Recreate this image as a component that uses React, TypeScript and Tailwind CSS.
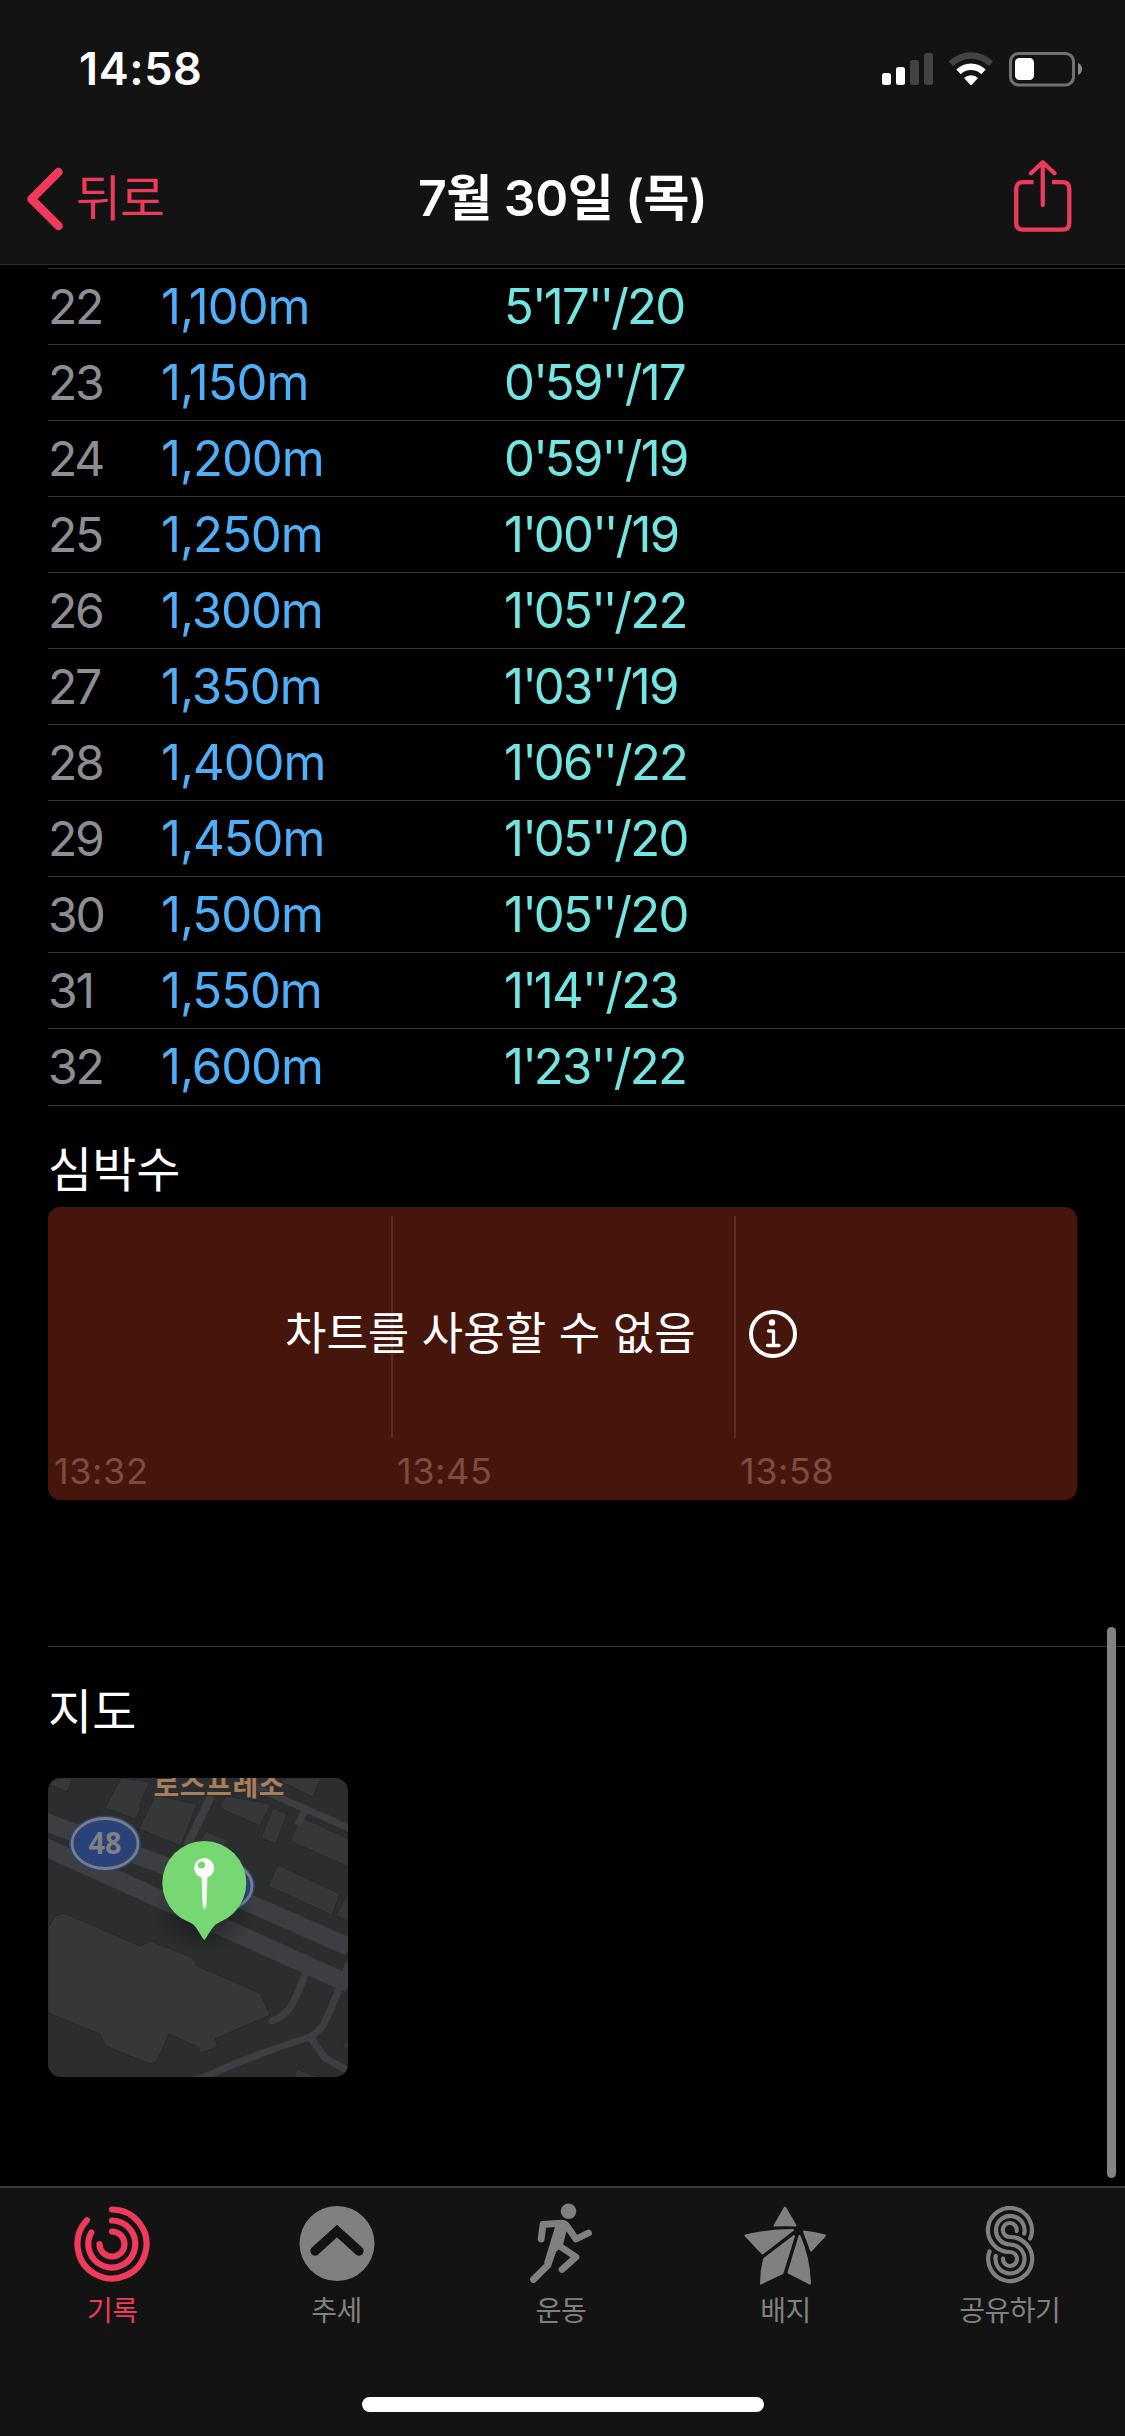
import React from "react";

type Split = {
  no: number;
  distance: string;
  pace: string;
};

const splits: Split[] = [
  { no: 22, distance: "1,100m", pace: "5'17''/20" },
  { no: 23, distance: "1,150m", pace: "0'59''/17" },
  { no: 24, distance: "1,200m", pace: "0'59''/19" },
  { no: 25, distance: "1,250m", pace: "1'00''/19" },
  { no: 26, distance: "1,300m", pace: "1'05''/22" },
  { no: 27, distance: "1,350m", pace: "1'03''/19" },
  { no: 28, distance: "1,400m", pace: "1'06''/22" },
  { no: 29, distance: "1,450m", pace: "1'05''/20" },
  { no: 30, distance: "1,500m", pace: "1'05''/20" },
  { no: 31, distance: "1,550m", pace: "1'14''/23" },
  { no: 32, distance: "1,600m", pace: "1'23''/22" },
];

const StatusBar = () => {
  return (
    <div className="flex h-[136px] items-start justify-between pl-[79px] pr-[42px] pt-[42px]">
      <span className="text-[45px] font-semibold leading-[54px] tracking-[0.6px]">14:58</span>
      <div className="flex items-center pt-[10px]">
        <svg width="52" height="36" viewBox="0 0 52 36">
          <rect x="0" y="21" width="9" height="12" rx="2.5" fill="#fff" />
          <rect x="14" y="15" width="9" height="18" rx="2.5" fill="#fff" />
          <rect x="28" y="8" width="9" height="25" rx="2.5" fill="#434343" />
          <rect x="42" y="1" width="9" height="32" rx="2.5" fill="#434343" />
        </svg>
        <svg className="ml-[14px]" width="46" height="36" viewBox="0 0 46 36">
          <path d="M.8 9.5A31.5 31.5 0 0 1 45.200 9.500L40.800 14A25.500 25.500 0 0 0 5.200 14Z" fill="#434343" />
          <path d="M8.300 17.500A21 21 0 0 1 37.700 17.500L33.200 22.200A14.500 14.500 0 0 0 12.800 22.200Z" fill="#fff" />
          <path d="M16 26A10 10 0 0 1 30 26L23.800 32.700Q23 33.500 22.200 32.700Z" fill="#fff" />
        </svg>
        <svg className="ml-[15px]" width="74" height="36" viewBox="0 0 74 36">
          <rect x="1.500" y="1.500" width="63" height="31.500" rx="8" fill="none" stroke="#717171" strokeWidth="3" />
          <rect x="6" y="6" width="19" height="22" rx="4.500" fill="#fff" />
          <path d="M69 11C74.500 13 74.500 21 69 23Z" fill="#8a8a8a" />
        </svg>
      </div>
    </div>
  );
};

const NavBar = () => {
  return (
    <div className="grid h-[128px] grid-cols-3 items-center">
      <div className="flex h-[128px] items-center pl-[26px] text-[#ee3a5b]">
        <svg className="-mt-[3px]" width="37" height="64" viewBox="0 0 37 64">
          <path d="M32.500 5L5.500 32L32.500 59" fill="none" stroke="currentColor" strokeWidth="8.500" strokeLinecap="round" strokeLinejoin="round" />
        </svg>
        <span className="-mt-[3px] ml-[13px] text-[49px] leading-[60px] tracking-[-1px]">뒤로</span>
      </div>
      <h1 className="-mt-[5px] whitespace-nowrap text-center text-[50px] font-semibold leading-[60px] tracking-[-0.5px]">
        7월 30일 (목)
      </h1>
      <svg className="-mt-[6px] mr-[53px] justify-self-end" width="58" height="74" viewBox="0 0 58 74">
        <g fill="none" stroke="#ee3a5b" strokeWidth="4.300">
          <path d="M19.500 22.200H9Q2.200 22.200 2.200 29V63Q2.200 69.700 9 69.700H48.500Q55.300 69.700 55.300 63V29Q55.300 22.200 48.500 22.200H38" />
          <path d="M28.750 45V3M17 13.300L28.750 2.300L40.500 13.300" strokeLinecap="round" strokeLinejoin="round" />
        </g>
      </svg>
    </div>
  );
};

const SplitRow: React.FC<{ item: Split }> = ({ item }) => {
  return (
    <div className="flex h-[76px] items-center border-t border-[#353537] pt-px text-[49px] leading-[60px]">
      <span className="w-[113px] text-[48px] tracking-[-2.2px] text-[#8e8e92]">{item.no}</span>
      <span className="w-[343px] tracking-[-1px] text-[#4fb0f9]">{item.distance}</span>
      <span className="tracking-[-1.7px] text-[#74e6e2]">
        {item.pace.split(/('+)/).map((part, i) => (
          <span key={i} className={part.startsWith("'") ? "tracking-[-3.1px]" : ""}>
            {part}
          </span>
        ))}
      </span>
    </div>
  );
};

const HeartRate = () => {
  return (
    <section>
      <h2 className="pt-[34px] text-[48px] leading-[60px]">심박수</h2>
      <div className="relative mr-12 mt-[7px] h-[293px] rounded-[12px] bg-[#46160d] pt-[9px]">
        <div className="grid h-[222px] grid-cols-3">
          <div />
          <div className="border-l-2 border-[#5d2d25]" />
          <div className="border-l-2 border-[#5d2d25]" />
        </div>
        <div className="grid grid-cols-3 pt-[11px] text-[36px] leading-[44px] tracking-[0.6px] text-[#7c4b42]">
          <span className="pl-[6px]">13:32</span>
          <span className="pl-[6px]">13:45</span>
          <span className="pl-[6px]">13:58</span>
        </div>
        <div className="absolute left-[237px] top-[97px] flex items-center">
          <span className="w-[463px] whitespace-nowrap text-[45px] leading-[60px]">차트를 사용할 수 없음</span>
          <svg width="50" height="50" viewBox="0 0 50 50" fill="none" stroke="#fff">
            <circle cx="25" cy="25" r="22" strokeWidth="4" />
            <circle cx="24" cy="13.500" r="3.200" fill="#fff" stroke="none" />
            <path d="M20.500 22H25.500V36M19.500 36.500H31" strokeWidth="3.300" strokeLinecap="round" strokeLinejoin="round" />
          </svg>
        </div>
      </div>
    </section>
  );
};

const MapThumb = () => {
  return (
    <svg className="mt-[36px] rounded-[13px]" width="300" height="299" viewBox="0 0 300 299">
      <defs>
        <radialGradient id="pinShadow">
          <stop offset="0" stopColor="#000" stopOpacity="0.450" />
          <stop offset="1" stopColor="#000" stopOpacity="0" />
        </radialGradient>
      </defs>
      <rect width="300" height="299" fill="#2c2d2f" />
      <g fill="#363739" stroke="#27282a" strokeWidth="1">
        <path d="M0 0H25L19 14L0 6Z" />
        <path d="M73 0L102 4L91 27L93 30L87 41L57 30Z" />
        <path d="M107 17L149 26L133 68L91 51Z" />
        <path d="M172 27L178 18L223 26L212 48L176 32Z" />
        <path d="M225 30L239 36L228 66L213 60Z" />
        <path d="M239 0H273L265 19L232 3Z" />
        <path d="M253 39L301 61V89L242 63Z" />
        <path d="M230 87L292 116L284 137L220 108Z" />
        <path d="M301 113L288 137L301 144Z" />
        <path d="M158 53L179 62L174 74L150 66Z" />
        <path d="M0 150L7 138L16 135L92 168L103 163L145 180L149 188L212 215L222 237L167 261L170 269L153 275L150 269L121 256L109 283L102 286L58 268L52 256L0 235Z" />
        <path d="M301 261L294 269L301 271Z" />
        <path d="M249 291L273 300H246Z" />
      </g>
      <g fill="none" stroke="#3d3e42">
        <path d="M163 18L139 68" strokeWidth="8" />
        <path d="M205 8L301 50M256 34L250 47" strokeWidth="7" />
        <path d="M-5 43L110 85L301 169" strokeWidth="18" />
        <path d="M-5 68L301 206" strokeWidth="18" />
        <path d="M258 194Q246 226 240 232Q234 239 224 243" strokeWidth="7" strokeLinecap="round" />
        <path d="M293 207L276 246Q269 255 262 259Q210 275 159 298L135 305M262 259L277 280L302 294M301 185L295 200" strokeWidth="7" />
      </g>
      <text x="171" y="17.500" textAnchor="middle" fontSize="28" fontWeight="700" fill="#a77d5a" stroke="#2c2d2f" strokeWidth="2" paintOrder="stroke" textLength="131">
        로스프레소
      </text>
      <g fill="#29427a">
        <ellipse cx="57" cy="65.500" rx="36" ry="28" />
        <ellipse cx="171" cy="108" rx="36" ry="28" />
      </g>
      <g fill="none" stroke="#7c7d80" strokeWidth="2.800">
        <ellipse cx="57" cy="65.500" rx="33" ry="25" />
        <ellipse cx="171" cy="108" rx="33" ry="25" />
      </g>
      <text x="57" y="76" textAnchor="middle" fontFamily="Noto Sans" fontSize="30" fontWeight="700" fill="#808183" textLength="33" lengthAdjust="spacingAndGlyphs">
        48
      </text>
      <ellipse cx="156" cy="136" rx="52" ry="38" fill="url(#pinShadow)" />
      <g fill="#77d873">
        <circle cx="156.300" cy="105" r="42" />
        <path d="M141 144C149 147 151 156 156.300 162C161.500 156 164 147 172 144Z" />
      </g>
      <path d="M153.800 96H159.200L158 128L156.500 131L155 128Z" fill="#fff" stroke="#fff" strokeWidth="0.600" />
      <circle cx="156.200" cy="90" r="10" fill="#fff" />
      <circle cx="153.500" cy="87" r="3.600" fill="#77d873" />
    </svg>
  );
};

const RingsIcon = () => (
  <svg width="76" height="76" viewBox="0 0 76 76" fill="none" stroke="currentColor" strokeWidth="6.200" strokeLinecap="round">
    <path d="M38 3.500A34.500 34.500 0 1 1 13 14.200" />
    <path d="M38 14.500A23.500 23.500 0 1 1 17.300 26.500" />
    <path d="M38 25.500A12.500 12.500 0 1 1 25.500 38" />
  </svg>
);

const TrendsIcon = () => (
  <svg width="76" height="76" viewBox="0 0 76 76" fill="none">
    <circle cx="38" cy="37.500" r="37.500" fill="currentColor" />
    <path d="M16 45L38 25L60 45" stroke="#131313" strokeWidth="9.300" strokeLinecap="round" />
  </svg>
);

const RunIcon = () => (
  <svg className="-ml-[2px] overflow-visible" width="76" height="76" viewBox="0 0 76 76" fill="none" stroke="currentColor" strokeLinecap="round" strokeLinejoin="round">
    <circle cx="46.500" cy="5.200" r="7.800" fill="currentColor" stroke="none" />
    <path d="M28.500 15L39 14Q44 14 47 18.500L44 27L41 39L34 46L28 60L22 57L33 21Z" fill="currentColor" stroke="none" />
    <path d="M19.200 33L21 18.500L40 17.200Q43.500 17.500 45.500 21L54 33L66.500 27" strokeWidth="6.800" />
    <path d="M36 39L54 51L40 63.500" strokeWidth="6.800" />
    <path d="M31 44L26 59L11.500 73.500" strokeWidth="6.800" />
  </svg>
);

const BadgeIcon = () => (
  <svg className="overflow-visible" width="82" height="78" viewBox="0 0 82 78" fill="currentColor" stroke="currentColor" strokeWidth="2" strokeLinejoin="round">
    <path d="M41 1.500L51.500 19.500Q41 19 30.500 19.500Z" />
    <path d="M1.500 29.500Q25 24 49 24L18.500 47.500Z" />
    <path d="M60 25.500Q72 27 81 29.500L67 44.500Z" />
    <path d="M50 30L38.500 67L17 77.500Q17 65 20 53Z" />
    <path d="M55.500 30Q65 51 66 77.500L44.500 66.500Z" />
  </svg>
);

const SharingIcon = () => (
  <svg width="50" height="78" viewBox="0 0 50 78" fill="none" stroke="currentColor" strokeWidth="4.200" strokeLinecap="round">
    <path d="M45.200 32.500A22 22 0 1 0 25 46A7 7 0 1 1 18 52.500" />
    <path d="M39.200 27.500A14.300 14.300 0 1 0 25 38.500A14.500 14.500 0 1 1 10.800 50" />
    <path d="M31.700 25A7 7 0 1 0 25 31A22 22 0 1 1 4.500 45.500" />
  </svg>
);

type TabProps = {
  label: string;
  active?: boolean;
  children: React.ReactNode;
};

const Tab: React.FC<TabProps> = ({ label, active, children }) => {
  return (
    <div className={active ? "flex flex-col items-center text-[#ee3a5b]" : "flex flex-col items-center text-[#808080]"}>
      <div className="flex h-[80px] items-start">{children}</div>
      <span className="mt-[5px] text-[28px] leading-[40px] tracking-[-0.5px]">{label}</span>
    </div>
  );
};

const TabBar = () => {
  return (
    <footer className="h-[250px] border-t-2 border-[#3c3c3c] bg-[#131313]">
      <div className="grid h-[209px] grid-cols-5 pr-[3px] pt-[18px]">
        <Tab label="기록" active>
          <RingsIcon />
        </Tab>
        <Tab label="추세">
          <TrendsIcon />
        </Tab>
        <Tab label="운동">
          <RunIcon />
        </Tab>
        <Tab label="배지">
          <BadgeIcon />
        </Tab>
        <Tab label="공유하기">
          <SharingIcon />
        </Tab>
      </div>
      <div className="mx-auto h-[15px] w-[402px] rounded-full bg-white" />
    </footer>
  );
};

const App = () => {
  return (
    <div className="relative flex h-[2436px] w-[1125px] flex-col overflow-hidden bg-black font-[Inter,'Noto_Sans_CJK_KR',sans-serif] text-white">
      <header className="h-[265px] border-b border-[#2a2a2a] bg-[#131313]">
        <StatusBar />
        <NavBar />
      </header>
      <main className="flex-1 pl-12 pt-[3px]">
        {splits.map((item) => (
          <SplitRow key={item.no} item={item} />
        ))}
        <div className="mt-px border-t border-[#353537]" />
        <HeartRate />
        <section className="mt-[146px] border-t border-[#353537]">
          <h2 className="pt-[35px] text-[48px] leading-[60px]">지도</h2>
          <MapThumb />
        </section>
      </main>
      <TabBar />
      <div className="absolute left-[1107px] top-[1627px] h-[551px] w-[9px] rounded-full bg-[#828282]" />
    </div>
  );
};

export default App;
